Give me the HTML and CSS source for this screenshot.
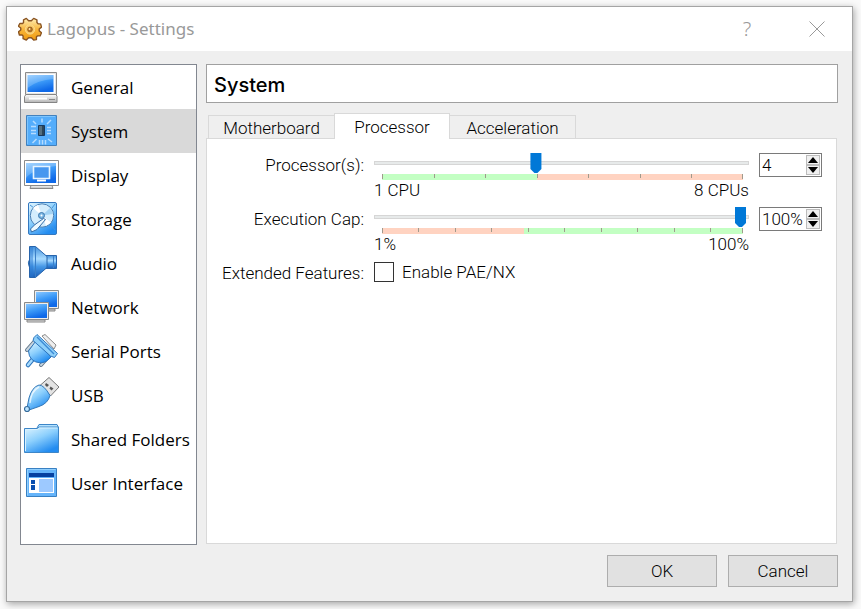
FILE: index.html
```html
<!DOCTYPE html>
<html lang="en">
<head>
<meta charset="utf-8">
<title>Lagopus - Settings</title>
<link rel="stylesheet" href="styles.css">
</head>
<body>
<svg class="defs" aria-hidden="true">
  <defs>
    <linearGradient id="screen" x1="0" y1="0" x2="0.4" y2="1"><stop offset="0" stop-color="#8cc8ff"/><stop offset="0.5" stop-color="#3d9bf8"/><stop offset="1" stop-color="#0f69e8"/></linearGradient>
    <linearGradient id="sky" x1="0" y1="0" x2="0.6" y2="1"><stop offset="0" stop-color="#e2f6ff"/><stop offset="0.5" stop-color="#8dd0fd"/><stop offset="1" stop-color="#238cf0"/></linearGradient>
    <linearGradient id="cone" x1="0" y1="0" x2="0" y2="1"><stop offset="0" stop-color="#3f8fdc"/><stop offset="0.4" stop-color="#a9dbff"/><stop offset="0.65" stop-color="#4597e6"/><stop offset="1" stop-color="#1b5fb8"/></linearGradient>
    <linearGradient id="metal" x1="0" y1="0" x2="0" y2="1"><stop offset="0" stop-color="#ffffff"/><stop offset="1" stop-color="#b4b4b4"/></linearGradient>
    <linearGradient id="gold" x1="0" y1="0" x2="0" y2="1"><stop offset="0" stop-color="#fff0b8"/><stop offset="0.5" stop-color="#f8b63c"/><stop offset="1" stop-color="#f09a10"/></linearGradient>
  </defs>
</svg>
<div class="window">
  <header class="titlebar">
    <svg class="gear" viewBox="0 0 26 26" aria-hidden="true">
      <path d="M9 1.500l2.500 2.500h3L17 1.500l3.500 1.500v3l1.500 1.500h2.500l1 3.500-2.500 2v2l2.500 2-1.500 3.500h-3l-1 1v3L17 25l-2.500-2.500h-3L9 25l-3.500-1.500v-3L4.500 19.500h-3L.5 16 3 14v-2L.5 10 2 7h3l1-1V3z" fill="url(#gold)" stroke="#8a5422" stroke-width="1.500" stroke-linejoin="round"/>
      <circle cx="13" cy="13.500" r="5" fill="#f9c964" stroke="#fbdc94"/>
      <circle cx="13" cy="13.500" r="2.600" fill="#b87522" stroke="#8a5422" stroke-width=".8"/>
      <circle cx="12.500" cy="13" r="1" fill="#ffe9ae"/>
    </svg>
    <h1 class="caption">Lagopus - Settings</h1>
    <button class="tool" type="button" aria-label="Help">?</button>
    <button class="tool" type="button" aria-label="Close"><svg class="cross" viewBox="0 0 16 16"><path d="M.5.5l15 15M15.500.5l-15 15" stroke="#999" fill="none"/></svg></button>
  </header>
  <main class="content">
    <nav class="categories">
      <a class="category" href="#general"><svg class="icon" viewBox="0 0 36 36"><path d="M1.500 3.500h31v22h-31z" fill="#e6e6e6" stroke="#8b8b8b"/><path d="M3 5h28v19H3z" fill="#fff"/><path d="M3.500 6h26v17h-26z" fill="url(#screen)"/><path d="M3.500 6h26v4q-16 1-26 9z" fill="#fff" opacity=".2"/><path d="M2 25.500h30l1 2v6H.5v-6z" fill="url(#metal)" stroke="#858585"/><path d="M5 29.500h18" stroke="#fff" stroke-width="2"/><path d="M25 30.500h6" stroke="#888"/></svg><span class="name">General</span></a>
      <a class="category selected" href="#system" aria-current="page"><svg class="icon" viewBox="0 0 36 36"><path d="M2.500 2.500h30v30h-30z" fill="#54adfb" stroke="#4281bd"/><path d="M3.500 31V3.500H31" fill="none" stroke="#7cc5ff"/><path d="M14.500 12.500h6v10h-6z" fill="#2c4658" stroke="#173a60"/><path d="M15 13h3v9h-3z" fill="#56707f"/><path d="M18 5.500v4M15.500 27v4.500M18.500 27v4.500M21.500 27v4.500M7 13.500h5M7 17.500h5M7 20.500h5M23 14.500h4M23 17.500h4M23 20.500h4M9 8l3 3M27 7l-4 4M8.500 30l4-4M24 26l4 3" fill="none" stroke="#b5dcff" stroke-width="1.500"/></svg><span class="name">System</span></a>
      <a class="category" href="#display"><svg class="icon" viewBox="0 0 36 36"><path d="M7 28.500h21l1 3H6z" fill="url(#metal)" stroke="#888"/><path d="M.5 3.500h34v25H.5z" fill="#fff" stroke="#8b8b8b"/><path d="M2 6h30v20H2z" fill="url(#screen)"/><path d="M2 6h30v3Q10 11 2 21z" fill="#fff" opacity=".22"/><path d="M9.500 9.500h16v12h-16z" fill="#4797ef" stroke="#e6f4ff" stroke-width="1.600"/><path d="M13 23.500h9" stroke="#fff" stroke-width="2"/></svg><span class="name">Display</span></a>
      <a class="category" href="#storage"><svg class="icon" viewBox="0 0 36 36"><rect x="4.500" y="1.500" width="28" height="32" rx="1.500" fill="url(#sky)" stroke="#3478bf"/><path d="M6 4l4 3M31 3l-3 4M31 29l-3-4" stroke="#4794d8"/><circle cx="18" cy="14.500" r="11.700" fill="#d4edfd" stroke="#4b80b4"/><path d="M18 14.500L9 7a12 12 0 0 1 5-3zM18 14.500l9 7a12 12 0 0 1-5 3z" fill="#fff"/><path d="M18 14.500L29 13a11 11 0 0 0-3-6z" fill="#a2d2f4"/><circle cx="17.500" cy="14.500" r="3" fill="#7ab7e4" stroke="#3e79af"/><circle cx="17.500" cy="14.500" r="1" fill="#fff"/><path d="M19.500 17.500l2 1-8.500 10-5.500 2.500-1-3 4.500-4.500z" fill="#eef9ff" stroke="#356da8"/></svg><span class="name">Storage</span></a>
      <a class="category" href="#audio"><svg class="icon" viewBox="0 0 36 36"><path d="M6 13.500q-3 4-.5 9z" fill="#397fc9" stroke="#2a67ab"/><path d="M21 10.500h11.500v13H21z" fill="url(#cone)" stroke="#2764ac"/><path d="M5.500 1.500h6l11.500 10v11l-11.500 10h-6z" fill="url(#cone)" stroke="#2764ac"/><path d="M11.500 2v30" stroke="#3b7fc7"/><path d="M6 2h3v30H6z" fill="#2876cf" opacity=".45"/><path d="M29.500 11v12" stroke="#3b7fc7"/></svg><span class="name">Audio</span></a>
      <a class="category" href="#network"><svg class="icon" viewBox="0 0 36 36"><path d="M16 20h15v2H16z" fill="#ccc" stroke="#888"/><path d="M10.500 1.500h24v18h-24z" fill="#eee" stroke="#8a8a8a"/><path d="M12 3h21v15H12z" fill="url(#screen)"/><path d="M3 31h18v2H3z" fill="#ddd" stroke="#888"/><path d="M.5 13.500h24v17H.5z" fill="#eee" stroke="#8a8a8a"/><path d="M2 15h21v14H2z" fill="url(#screen)"/></svg><span class="name">Network</span></a>
      <a class="category" href="#serial"><svg class="icon" viewBox="0 0 36 36"><path d="M18 3l3-1.500L32 12l-2 4z" fill="#eee" stroke="#8a8a8a"/><path d="M3 17l7-8M17 32l7-8" stroke="#65788b" stroke-width="4" stroke-linecap="round"/><path d="M3 17l7-8M17 32l7-8" stroke="#c7d6e1" stroke-width="2" stroke-linecap="round"/><path d="M4 32l5-6" stroke="#2e75bd" stroke-width="4.500" stroke-linecap="round"/><path d="M4 32l5-6" stroke="#a7dcff" stroke-width="2.500" stroke-linecap="round"/><path d="M11.500 8.500L27 24q-5 6-10 6Q5 29 4.500 18z" fill="url(#sky)" stroke="#2e75bd"/><path d="M10 4.500l3-3 20.500 19-3 4-4-1.500L9 7.500z" fill="#8fd0fa" stroke="#2e75bd"/><path d="M13 4l17 17" stroke="#3c8ad4" stroke-width="1.500"/></svg><span class="name">Serial Ports</span></a>
      <a class="category" href="#usb"><svg class="icon" viewBox="0 0 36 36"><path d="M16 8.500l9-8L35 10l-8.500 9z" fill="#e3e3e3" stroke="#777"/><path d="M22 6l3 2-2 2-2-2zM26.500 9.500l3 2-2 2-2-2z" fill="#555"/><path d="M15 8q5 0 11 10.500-2 8-11 11L5 33l-2-2 2-10Q8 10 15 8z" fill="url(#sky)" stroke="#3478b8"/><path d="M15 10Q7 14 6 26" fill="none" stroke="#fff" stroke-width="1.500" opacity=".7"/><circle cx="3" cy="32" r="2.500" fill="#bde5ff" stroke="#356b9c" stroke-width="1.200"/></svg><span class="name">USB</span></a>
      <a class="category" href="#folders"><svg class="icon" viewBox="0 0 36 36"><path d="M13 8V7l2-3.500h18l1 2V9z" fill="#b5e3ff" stroke="#3d86c8"/><path d="M.5 7.500H13l2-1.500h19.500v25.500H.5z" fill="url(#sky)" stroke="#3d86c8"/><path d="M1.500 30V8.500h12l2-1.500H33.500" fill="none" stroke="#d8f1ff"/></svg><span class="name">Shared Folders</span></a>
      <a class="category" href="#interface"><svg class="icon" viewBox="0 0 36 36"><path d="M2.500 3.500h30v28h-30z" fill="#65b4fa" stroke="#3980c2"/><path d="M3.500 30.500v-26h28" fill="none" stroke="#91d0ff"/><path d="M5 8h25v4H5z" fill="#0641a0"/><path d="M5 13h25v15H5z" fill="#fff"/><path d="M7 15h4v4H7zM7 20h4v5H7z" fill="#0b4fb0"/><path d="M15 14h14v13H15z" fill="#9dc9ff"/></svg><span class="name">User Interface</span></a>
    </nav>
    <section class="details">
      <h2 class="heading">System</h2>
      <div class="tabs" role="tablist">
        <button class="tab" type="button" role="tab" aria-selected="false">Motherboard</button>
        <button class="tab active" type="button" role="tab" aria-selected="true">Processor</button>
        <button class="tab" type="button" role="tab" aria-selected="false">Acceleration</button>
      </div>
      <form class="pane" id="settings">
        <label class="label" for="cpus">Processor(s):</label>
        <div class="slider">
          <input class="range" id="cpus" type="range" min="1" max="8" value="4">
          <svg class="scale" aria-hidden="true">
            <rect class="good" width="100%" height="6"/><rect class="bad" x="42.86%" width="57.14%" height="6"/>
            <g class="ticks"><rect width="1" height="5"/><rect x="14.29%" width="1" height="4"/><rect x="28.57%" width="1" height="4"/><rect x="42.86%" width="1" height="4"/><rect x="57.14%" width="1" height="4"/><rect x="71.43%" width="1" height="4"/><rect x="85.71%" width="1" height="4"/><rect x="99.8%" width="1" height="5"/></g>
          </svg>
          <div class="limits"><span>1 CPU</span><span>8 CPUs</span></div>
        </div>
        <div class="spin">
          <input class="value" type="text" value="4" aria-label="Processor count">
          <button class="step up" type="button" aria-label="More processors"></button>
          <button class="step down" type="button" aria-label="Fewer processors"></button>
        </div>
        <label class="label" for="cap">Execution Cap:</label>
        <div class="slider">
          <input class="range" id="cap" type="range" min="1" max="100" value="100">
          <svg class="scale" aria-hidden="true">
            <rect class="bad" width="100%" height="6"/><rect class="good" x="39.39%" width="60.61%" height="6"/>
            <g class="ticks"><rect width="1" height="5"/><rect x="10.1%" width="1" height="4"/><rect x="20.2%" width="1" height="4"/><rect x="30.3%" width="1" height="4"/><rect x="40.4%" width="1" height="4"/><rect x="50.5%" width="1" height="4"/><rect x="60.6%" width="1" height="4"/><rect x="70.7%" width="1" height="4"/><rect x="80.8%" width="1" height="4"/><rect x="90.9%" width="1" height="4"/><rect x="99.8%" width="1" height="5"/></g>
          </svg>
          <div class="limits"><span>1%</span><span>100%</span></div>
        </div>
        <div class="spin">
          <input class="value" type="text" value="100%" aria-label="Execution cap value">
          <button class="step up" type="button" aria-label="Raise cap"></button>
          <button class="step down" type="button" aria-label="Lower cap"></button>
        </div>
        <span class="label">Extended Features:</span>
        <label class="option"><input class="check" type="checkbox">Enable PAE/NX</label>
      </form>
    </section>
  </main>
  <footer class="actions">
    <button class="action" type="submit" form="settings">OK</button>
    <button class="action" type="button">Cancel</button>
  </footer>
</div>
</body>
</html>
```
FILE: styles.css
```css
* { box-sizing: border-box; }

body {
  margin: 0;
  min-height: 100vh;
  padding: 6px 8px 7px 6px;
  display: flex;
  background: #fafafa;
  color: #000;
  font: 300 17px/20px Roboto, "Liberation Sans", sans-serif;
}

button, input {
  margin: 0;
  padding: 0;
  border: 0;
  border-radius: 0;
  background: none;
  color: inherit;
  font: inherit;
}

.defs { position: absolute; width: 0; height: 0; }

.window {
  flex: 1;
  display: flex;
  flex-direction: column;
  border: 1px solid #a5a5a5;
  background: #efefef;
  box-shadow: 1px 2px 7px rgba(0, 0, 0, 0.35);
}

.titlebar {
  height: 44px;
  padding-left: 11px;
  display: flex;
  align-items: center;
  background: #fff;
  color: #999;
  font-family: "Noto Sans", sans-serif;
}

.gear { width: 24px; height: 24px; }

.caption {
  flex: 1;
  margin: 0 0 0 5px;
  font-size: 17px;
  font-weight: 400;
}

.tool {
  width: 70px;
  height: 44px;
  display: grid;
  place-items: center;
  font-size: 20px;
}

.cross { width: 16px; height: 16px; }

.content {
  flex: 1;
  display: flex;
  gap: 9px;
  padding: 13px 14px 0 13px;
}

.categories {
  width: 177px;
  border: 1px solid #828790;
  background: #fff;
}

.category {
  height: 44px;
  padding-left: 3px;
  display: flex;
  align-items: center;
  gap: 11px;
  color: #000;
  font: 400 17px/20px "Open Sans", sans-serif;
  text-decoration: none;
  white-space: nowrap;
}

.name { padding-top: 2px; }

.selected { background: #d9d9d9; }

.icon { width: 36px; height: 36px; }

.details {
  flex: 1;
  display: flex;
  flex-direction: column;
}

.heading {
  height: 39px;
  margin: 0;
  padding: 0 7px;
  border: 1px solid #a0a0a0;
  background: #fff;
  font-family: Inter, "Liberation Sans", sans-serif;
  font-size: 20px;
  font-weight: 500;
  line-height: 40px;
}

.tabs {
  height: 35px;
  padding: 0 2px;
  display: flex;
  align-items: flex-end;
}

.tab {
  width: 127px;
  height: 23px;
  padding-top: 2px;
  border: 1px solid #d9d9d9;
  border-bottom: 0;
}

.tab.active {
  z-index: 1;
  width: 116px;
  height: 26px;
  margin: 0 -1px -1px;
  padding-top: 0;
  background: #fff;
}

.pane {
  flex: 1;
  margin: 0 1px 1px 0;
  padding: 14px;
  display: grid;
  grid-template-columns: 143px 1fr 63px;
  align-content: start;
  gap: 8px 10px;
  border: 1px solid #d9d9d9;
  background: #fff;
}

.label {
  height: 24px;
  line-height: 24px;
  text-align: right;
  white-space: nowrap;
}

.slider { height: 46px; }

.range {
  width: 100%;
  height: 20px;
  display: block;
  appearance: none;
  background: linear-gradient(#e7eaea, #e7eaea) center / calc(100% - 2px) 2px no-repeat,
    linear-gradient(#d6d6d6, #d6d6d6) center / 100% 4px no-repeat;
}

.range::-webkit-slider-thumb {
  width: 17px;
  height: 20px;
  appearance: none;
  background: #0078d7;
  clip-path: polygon(3px 0, 14px 0, 14px 16px, 10px 20px, 7px 20px, 3px 16px);
}

.scale {
  width: calc(100% - 14px);
  height: 6px;
  margin: 1px 6px 0 8px;
  display: block;
  shape-rendering: crispEdges;
}

.good { fill: #c3ffc3; }
.bad { fill: #ffd3c1; }
.ticks { fill: #a09a8c; }

.limits {
  display: flex;
  justify-content: space-between;
}

.spin {
  height: 24px;
  padding: 1px;
  display: grid;
  grid-template: 1fr 1fr / 1fr 14px;
  border: 1px solid #7a7a7a;
}

.value {
  grid-row: 1 / 3;
  width: 100%;
  min-width: 0;
  padding-left: 1px;
}

.step {
  display: grid;
  place-items: center;
  border: 1px solid #bcbcbc;
  background: #f0f0f0;
}

.step::before {
  width: 10px;
  height: 6px;
  background: #000;
  clip-path: polygon(50% 0, 100% 100%, 0 100%);
  content: "";
}

.down::before { clip-path: polygon(0 0, 100% 0, 50% 100%); }

.option {
  grid-column: 2 / 4;
  height: 22px;
  display: flex;
  align-items: center;
  gap: 8px;
}

.check {
  width: 20px;
  height: 20px;
  appearance: none;
  border: 1px solid #333;
}

.check:checked { background: #0078d7; }

.actions {
  padding: 10px 14px;
  display: flex;
  justify-content: flex-end;
  gap: 11px;
}

.action {
  width: 110px;
  height: 32px;
  margin-bottom: 4px;
  border: 1px solid #adadad;
  background: #e1e1e1;
}
```
